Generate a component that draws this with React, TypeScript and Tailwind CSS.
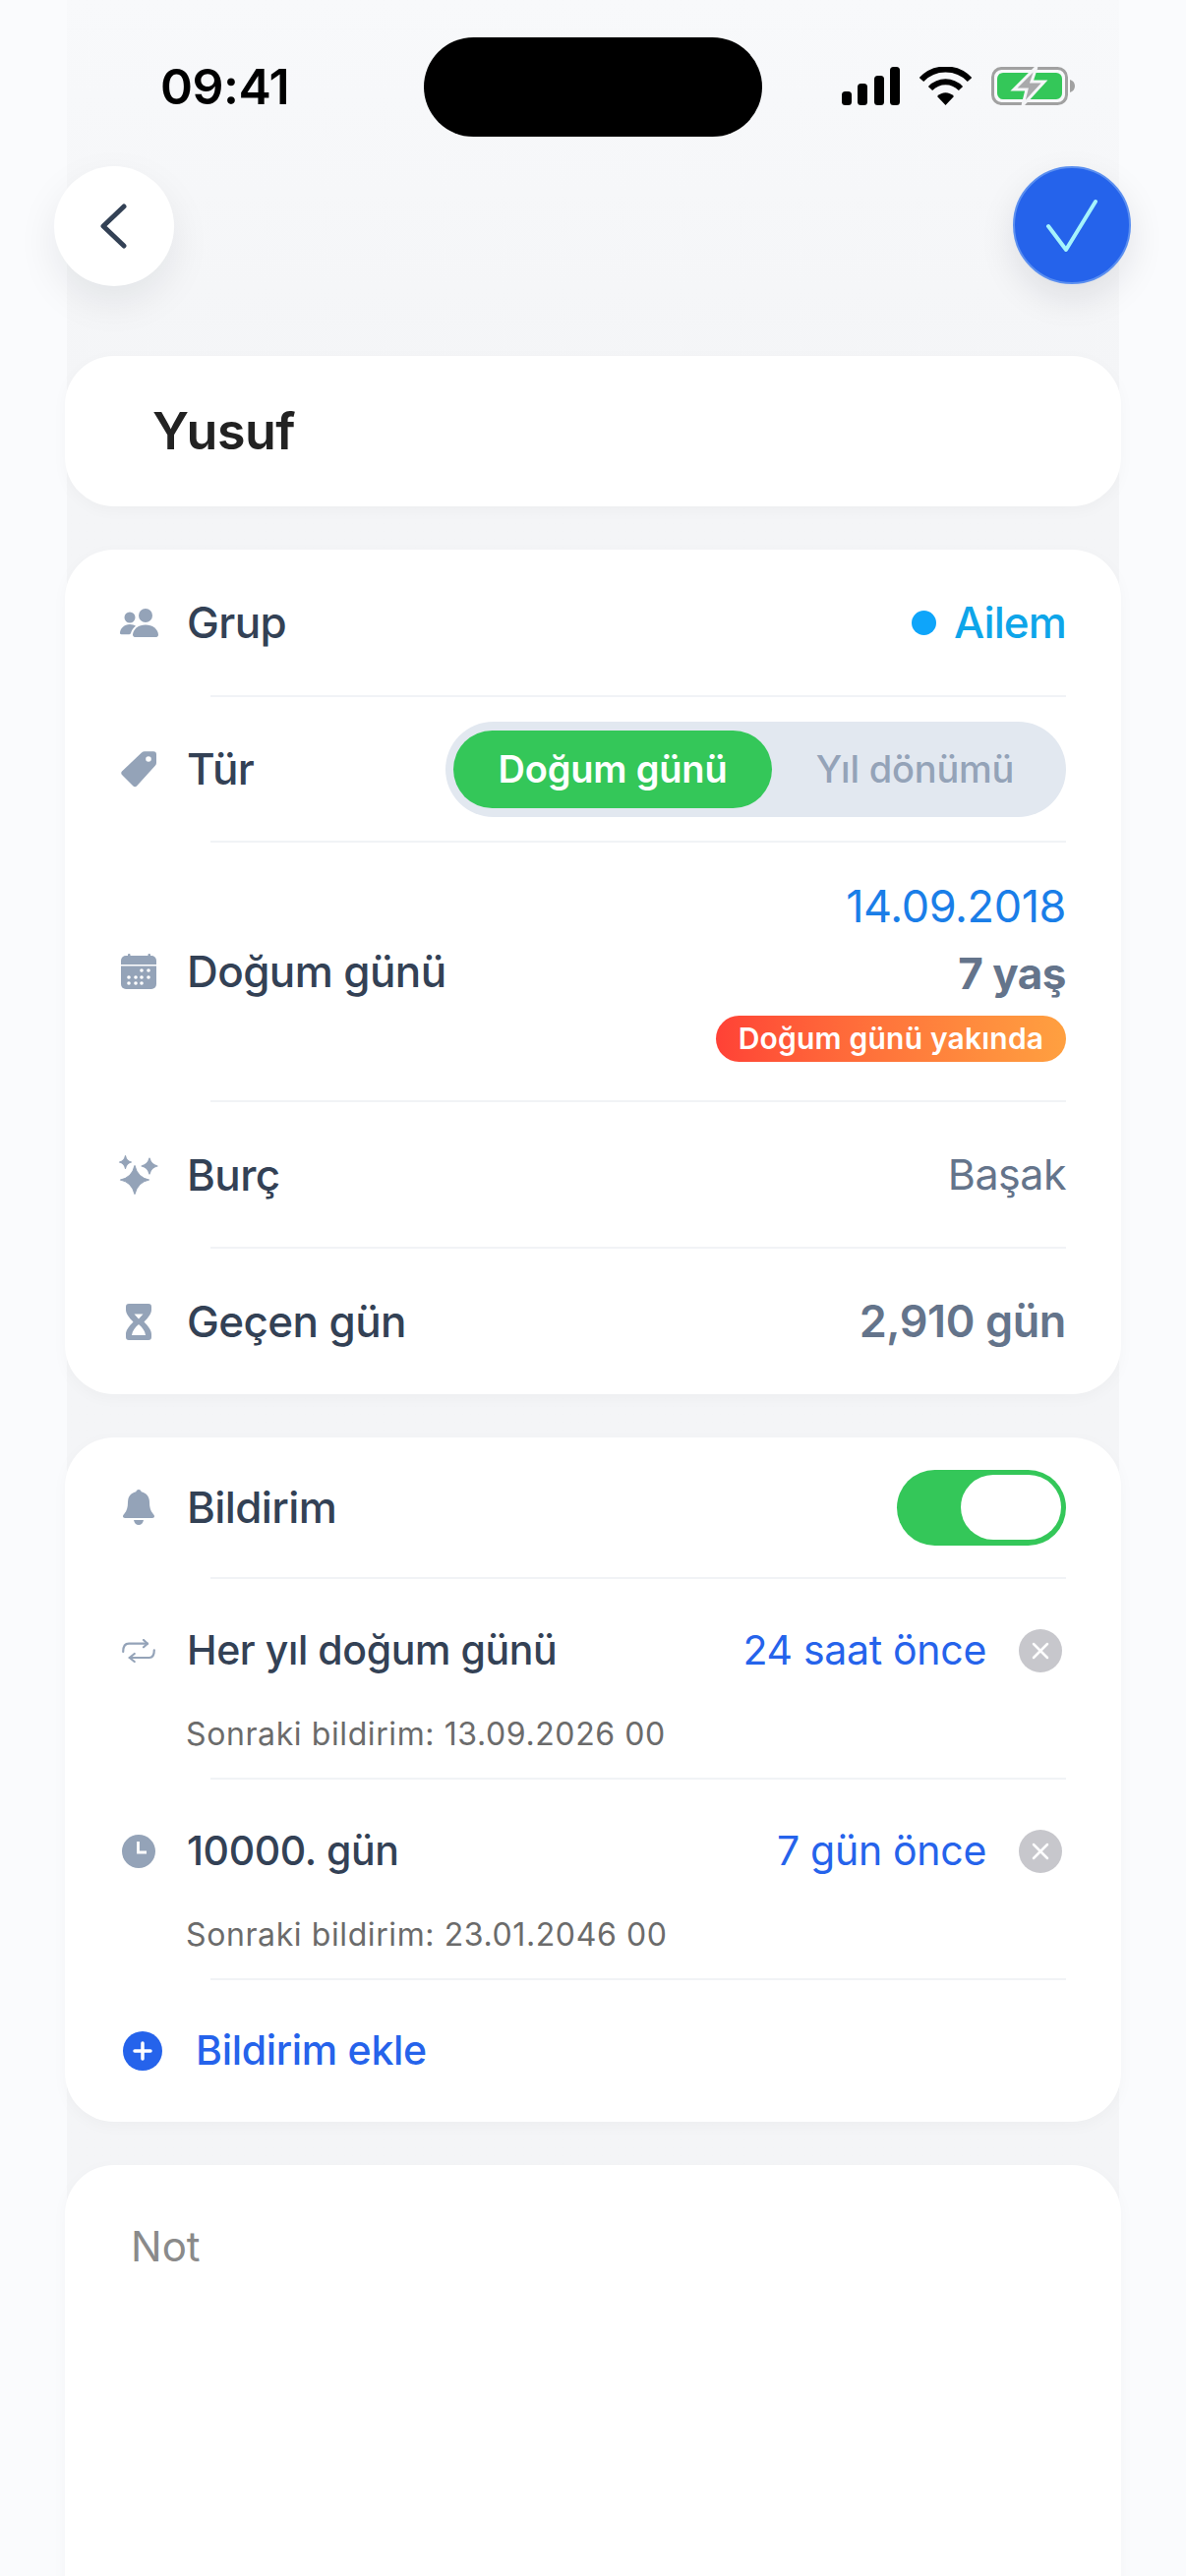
import type { ReactNode } from 'react'

const Divider = () => <div className="ml-[148px] mr-[56px] h-[2px] bg-[#f1f3f6]" />

function Row({ icon, label, right, className, small }: { icon: ReactNode; label: string; right?: ReactNode; className: string; small?: boolean }) {
  return (
    <div className={`flex items-center pr-[56px] ${className}`}>
      <div className="w-[124px] shrink-0 pl-[50px] pr-[24px]">
        <div className="flex w-[50px] shrink-0 justify-center">{icon}</div>
      </div>
      <span className={`font-medium text-[#334155] ${small ? 'text-[41px] tracking-[-0.4px]' : 'text-[44px] tracking-[-0.6px]'}`}>{label}</span>
      <div className="ml-auto">{right}</div>
    </div>
  )
}

const GroupIcon = () => (
  <svg width="39" height="29" viewBox="0 0 39 29" fill="#94a3b8">
    <circle cx="10" cy="9" r="5.500" />
    <circle cx="26" cy="7" r="7" />
    <path d="M0 25c0-5 4.500-9 10-9 2.500 0 4.500.7 6 1.800-2.500 1.800-4.200 4.400-5 7.200-.2.700-.8 1.200-1.500 1.200H1.500C.6 26.200 0 25.800 0 25z" />
    <path d="M13 26.500C13.500 20.500 19 16.500 26 16.500s12.500 4 13 10c0 1.500-1 2.500-2 2.500H15c-1 0-2-1-2-2.500z" />
  </svg>
)

const TagIcon = () => (
  <svg width="36" height="37" viewBox="0 0 36 37" fill="#94a3b8">
    <path fillRule="evenodd" d="M21 1.500C22 .7 23 .3 24 .3h9a3 3 0 0 1 3 3V12c0 1-.4 2-1.200 2.800L16 35.500c-1 1-2.500 1-3.500 0L1 24c-1-1-1-2.500 0-3.500zM28 5.200a2.800 2.800 0 1 0 0 5.600 2.800 2.800 0 0 0 0-5.600z" />
  </svg>
)

const CalendarIcon = () => (
  <svg width="36" height="37" viewBox="0 0 36 37" fill="#94a3b8">
    <rect x="0" y="2" width="36" height="34" rx="5" />
    <rect x="7" y="0" width="2.500" height="4" rx="1" />
    <rect x="27.500" y="0" width="2.500" height="4" rx="1" />
    <rect x="0" y="11" width="36" height="1.500" fill="#fff" />
    <g fill="#fff">
      <circle cx="21" cy="17" r="1.800" />
      <circle cx="28" cy="17" r="1.800" />
      <circle cx="8" cy="24" r="1.800" />
      <circle cx="15" cy="24" r="1.800" />
      <circle cx="21" cy="24" r="1.800" />
      <circle cx="28" cy="24" r="1.800" />
      <circle cx="8" cy="30" r="1.800" />
      <circle cx="15" cy="30" r="1.800" />
      <circle cx="21" cy="30" r="1.800" />
    </g>
  </svg>
)

const SparkIcon = () => (
  <svg width="42" height="42" viewBox="0 0 42 42" fill="#94a3b8" stroke="#94a3b8" strokeWidth="1.200" strokeLinejoin="round">
    <path d="M17 11.500Q19.500 23.500 31.500 26 19.500 28.500 17 40.500 14.500 28.500 2.500 26 14.500 23.500 17 11.500z" />
    <path d="M7.500 1.500Q8.500 7 13.500 8 8.500 9 7.500 14.500 6.500 9 1.500 8 6.500 7 7.500 1.500z" />
    <path d="M32 4Q33.500 10.500 40 12 33.500 13.500 32 20 30.500 13.500 24 12 30.500 10.500 32 4z" />
  </svg>
)

const HourglassIcon = () => (
  <svg width="26" height="37" viewBox="0 0 26 37" fill="#94a3b8">
    <path fillRule="evenodd" d="M3 0h20a3 3 0 0 1 3 3v3c0 4-3 8-7.500 12.500C23 23 26 27 26 31v3a3 3 0 0 1-3 3H3a3 3 0 0 1-3-3v-3c0-4 3-8 7.500-12.500C3 14 0 10 0 6V3a3 3 0 0 1 3-3zM8.500 10.500h9L13 15.500zM13 21c-3.500 3-6.500 6.500-7 11h14c-.5-4.500-3.500-8-7-11z" />
  </svg>
)

const BellIcon = () => (
  <svg width="32" height="36" viewBox="0 0 32 36" fill="#94a3b8">
    <path d="M16 0c1.500 0 2.500 1 2.700 2.300C24 3.500 27 7.500 27 13c0 5 1 8.500 3.500 11.500.9 1 1.500 1.800 1.500 2.800 0 1.200-1 1.700-2 1.700H2c-1 0-2-.5-2-1.700 0-1 .6-1.800 1.500-2.800C4 21.500 5 18 5 13c0-5.500 3-9.500 8.300-10.700C13.500 1 14.500 0 16 0z" />
    <path d="M11 31h10c-.5 3-2.500 5-5 5s-4.500-2-5-5z" />
  </svg>
)

const RepeatIcon = () => (
  <svg width="34" height="24" viewBox="0 0 34 24" fill="none" stroke="#94a3b8" strokeWidth="2.200" strokeLinecap="round" strokeLinejoin="round">
    <path d="M1.200 13C1.200 8 3 4.700 7 4.700h19" />
    <path d="M22 1l4 3.700-4 3.600" />
    <path d="M32.800 11.300c0 4.500-1.500 7.700-5 7.700H7.700" />
    <path d="M12.700 15l-5 4 5 4" />
  </svg>
)

const ClockIcon = () => (
  <svg width="34" height="34" viewBox="0 0 34 34">
    <circle cx="17" cy="17" r="17" fill="#94a3b8" />
    <path d="M16.500 7v11H25" fill="none" stroke="#fff" strokeWidth="2.800" />
  </svg>
)

const CloseDot = () => (
  <div className="ml-[33px] mr-[4px] flex size-[44px] items-center justify-center rounded-full bg-[#c7c7cc]">
    <svg width="18" height="18" viewBox="0 0 18 18" stroke="#fff" strokeWidth="2.500" strokeLinecap="round">
      <path d="M2 2l14 14M16 2L2 16" />
    </svg>
  </div>
)

const Next = ({ children }: { children: ReactNode }) => (
  <div className="-mt-[12px] pl-[123px] text-[32px] leading-[48px] tracking-[0.6px] text-[#6b6b6b]">{children}</div>
)

export default function App() {
  return (
    <div className="h-[2620px] overflow-hidden bg-[#fafbfd] [font-family:Inter,sans-serif]">
      <div className="mx-[68px] h-full bg-gradient-to-b from-[#f8f9fb] to-[#f4f5f7] to-[15%]">
        <div className="-mx-[68px]">
          {/* status bar */}
          <div className="flex h-[169px] items-start">
            <span className="ml-[163px] mt-[63px] w-[268px] text-[50px] font-semibold leading-[50px] tracking-[-0.5px] text-black">09:41</span>
            <div className="mt-[38px] h-[101px] w-[344px] rounded-full bg-black" />
            <div className="ml-[81px] mt-[68px] flex items-end gap-[21px]">
              <svg width="59" height="39" viewBox="0 0 59 39" fill="#000">
                <rect x="0" y="25" width="10" height="14" rx="3.500" />
                <rect x="16" y="17" width="10" height="22" rx="3.500" />
                <rect x="33" y="9" width="10" height="30" rx="3.500" />
                <rect x="49" y="0" width="10" height="39" rx="3.500" />
              </svg>
              <svg width="53" height="39" viewBox="0 0 53 39" fill="none" className="-ml-[1px]">
                <path d="M2 13C15-1 38-1 51 13" stroke="#000" strokeWidth="6" />
                <path d="M11 22c9-9 22-9 31 0" stroke="#000" strokeWidth="6" />
                <path d="M18 30c5-5 12-5 17 0l-8.500 9z" fill="#000" />
              </svg>
              <svg width="85" height="39" viewBox="0 0 85 39" fill="none" className="-ml-[1px]">
                <rect x="1.500" y="1.500" width="75" height="36" rx="9" stroke="#a1a1a1" strokeWidth="3" />
                <rect x="6" y="6" width="66" height="27" rx="6" fill="#34c759" />
                <path d="M80 13c3 1 5 3 5 6.500s-2 5.500-5 6.500z" fill="#a1a1a1" />
                <path d="M46 0L23 23h13l-4 16 22-24H41z" fill="#a9a9ab" stroke="#f5f6f8" strokeWidth="3" />
              </svg>
            </div>
          </div>

          {/* nav buttons */}
          <div className="flex h-[193px] items-start justify-between pl-[55px] pr-[56px]">
            <button className="flex size-[122px] items-center justify-center rounded-full bg-white shadow-[0_16px_40px_rgba(15,23,42,0.08)]">
              <svg width="32" height="46" viewBox="0 0 32 46" fill="none" stroke="#334155" strokeWidth="5" strokeLinecap="round" strokeLinejoin="round">
                <path d="M26 3L5 23l21 20" />
              </svg>
            </button>
            <button className="flex size-[120px] items-center justify-center rounded-full border-[2px] border-[#5b8ff0] bg-[#2563eb] shadow-[0_14px_36px_rgba(15,23,42,0.1)]">
              <svg width="56" height="54" viewBox="0 0 56 54" fill="none" stroke="#a5f3fc" strokeWidth="4" strokeLinecap="round" strokeLinejoin="round">
                <path d="M4 28l18 24L52 3" />
              </svg>
            </button>
          </div>

          <div className="flex flex-col gap-[44px] px-[66px]">
            {/* name */}
            <div className="flex h-[153px] items-center rounded-[50px] bg-white pl-[89px] shadow-[0_4px_16px_rgba(15,23,42,0.03)]">
              <span className="text-[52px] font-semibold tracking-[-0.5px] text-[#222]">Yusuf</span>
            </div>

            {/* details */}
            <div className="rounded-[50px] bg-white shadow-[0_4px_16px_rgba(15,23,42,0.03)]">
              <Row
                className="h-[148px]"
                icon={<GroupIcon />}
                label="Grup"
                right={
                  <div className="flex items-center gap-[18px]">
                    <span className="size-[25px] rounded-full bg-[#0ea5fa]" />
                    <span className="text-[44px] font-medium tracking-[-0.9px] text-[#0ea5e9]">Ailem</span>
                  </div>
                }
              />
              <Divider />
              <Row
                className="h-[146px]"
                icon={<TagIcon />}
                label="Tür"
                right={
                  <div className="flex h-[97px] w-[631px] items-center rounded-full bg-[#e2e8f0] pl-[8px]">
                    <div className="flex h-[79px] w-[324px] items-center justify-center rounded-full bg-[#34c759] text-[38px] font-semibold tracking-[-0.2px] text-white">
                      Doğum günü
                    </div>
                    <div className="flex-1 pr-[8px] text-center text-[38px] font-medium tracking-[-0.2px] text-[#94a3b8]">Yıl dönümü</div>
                  </div>
                }
              />
              <Divider />
              <Row
                className="h-[262px]"
                icon={<CalendarIcon />}
                label="Doğum günü"
                right={
                  <div className="flex -translate-y-[2px] flex-col items-end">
                    <span className="text-[45px] leading-[60px] tracking-[-0.4px] text-[#1a7ee8]">14.09.2018</span>
                    <span className="mt-[8px] text-[44px] font-bold leading-[60px] tracking-[-0.5px] text-[#64748b]">7 yaş</span>
                    <span className="mt-[13px] flex h-[47px] w-[356px] items-center justify-center rounded-full bg-gradient-to-r from-[#ff4136] to-[#ffa040] text-[30px] font-semibold tracking-[0.2px] text-white">
                      Doğum günü yakında
                    </span>
                  </div>
                }
              />
              <Divider />
              <Row
                className="h-[147px]"
                icon={<SparkIcon />}
                label="Burç"
                right={<span className="text-[43px] tracking-[-0.5px] text-[#64748b]">Başak</span>}
              />
              <Divider />
              <Row
                className="h-[148px]"
                icon={<HourglassIcon />}
                label="Geçen gün"
                right={<span className="text-[45px] font-semibold tracking-[-0.4px] text-[#64748b]">2,910 gün</span>}
              />
            </div>

            {/* notifications */}
            <div className="rounded-[50px] bg-white shadow-[0_4px_16px_rgba(15,23,42,0.03)]">
              <Row
                className="h-[142px]"
                icon={<BellIcon />}
                label="Bildirim"
                right={
                  <div className="flex h-[77px] w-[172px] items-center justify-end rounded-full bg-[#34c759] pr-[5px]">
                    <div className="h-[66px] w-[102px] rounded-full bg-white" />
                  </div>
                }
              />
              <Divider />
              <div className="h-[202px]">
                <Row small className="h-[146px]" icon={<RepeatIcon />} label="Her yıl doğum günü" right={
                  <div className="flex items-center">
                    <span className="text-[41px] tracking-[-0.3px] text-[#2563eb]">24 saat önce</span>
                    <CloseDot />
                  </div>
                } />
                <Next>Sonraki bildirim: 13.09.2026 00</Next>
              </div>
              <Divider />
              <div className="h-[202px]">
                <Row small className="h-[146px]" icon={<ClockIcon />} label="10000. gün" right={
                  <div className="flex items-center">
                    <span className="text-[41px] tracking-[-0.3px] text-[#2563eb]">7 gün önce</span>
                    <CloseDot />
                  </div>
                } />
                <Next>Sonraki bildirim: 23.01.2046 00</Next>
              </div>
              <Divider />
              <div className="flex h-[144px] items-center pl-[59px]">
                <svg width="40" height="40" viewBox="0 0 40 40">
                  <circle cx="20" cy="20" r="20" fill="#2563eb" />
                  <path d="M20 12v16M12 20h16" stroke="#fff" strokeWidth="3.500" strokeLinecap="round" />
                </svg>
                <span className="ml-[34px] text-[41px] font-medium tracking-[-0.3px] text-[#2563eb]">Bildirim ekle</span>
              </div>
            </div>

            {/* note */}
            <div className="h-[600px] rounded-[50px] bg-white px-[67px] pt-[53px] shadow-[0_4px_16px_rgba(15,23,42,0.03)]">
              <span className="text-[42px] leading-[60px] text-[#8a8a8a]">Not</span>
            </div>
          </div>
        </div>
      </div>
    </div>
  )
}
